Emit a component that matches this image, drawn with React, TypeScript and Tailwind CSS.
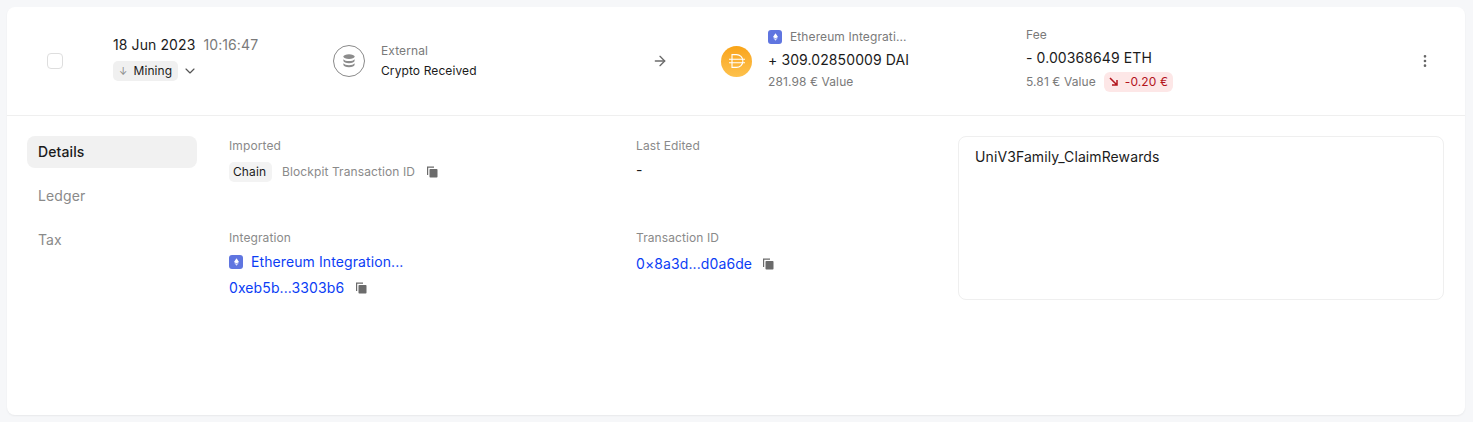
import { ArrowRight, ChevronDown, MoreVertical } from 'lucide-react'

function CopyIcon() {
  return (
    <svg width="14" height="14" viewBox="0 0 14 14" className="shrink-0">
      <path d="M2 1.5h7v1.2H3.2V10H2z" fill="#6b6b6b" />
      <rect x="4.5" y="4" width="8" height="8.5" rx="0.8" fill="#6b6b6b" />
    </svg>
  )
}

function EthBadge() {
  return (
    <span className="w-[14px] h-[14px] rounded-[3px] bg-[#5f75e0] flex items-center justify-center shrink-0">
      <svg width="5" height="8" viewBox="0 0 6 9">
        <path d="M3 0 6 4.500 3 6.200 0 4.500z" fill="#ffffff" />
        <path d="M0 5.200 3 7 6 5.200 3 9z" fill="#dfe4fb" />
      </svg>
    </span>
  )
}

function DaiIcon() {
  return (
    <span className="w-[31px] h-[31px] rounded-full bg-gradient-to-b from-[#f9a416] to-[#fdc14b] flex items-center justify-center shrink-0">
      <svg width="18" height="14" viewBox="0 0 18 14" fill="none" stroke="#ffffff" strokeWidth="1.1">
        <path d="M4 .6v12.800h4.500a6.400 6.400 0 0 0 0-12.800z" />
        <path d="M1 5.200h16M1 8.800h16" />
      </svg>
    </span>
  )
}

function StackIcon() {
  return (
    <span className="w-8 h-8 rounded-full border border-[#8a8a8a] flex items-center justify-center shrink-0">
      <svg width="12" height="14" viewBox="0 0 12 14" fill="#8c8c8c">
        <ellipse cx="6" cy="2.600" rx="5.600" ry="2.400" />
        <path d="M.4 5.200c1 1.300 3 1.900 5.600 1.900s4.600-.6 5.600-1.900v1.600c0 1.400-2.500 2.500-5.600 2.500S.4 8.200.4 6.800z" />
        <path d="M.4 9.300c1 1.300 3 1.900 5.600 1.900s4.600-.6 5.600-1.900v1.400c0 1.400-2.500 2.500-5.600 2.500S.4 12.100.4 10.700z" />
      </svg>
    </span>
  )
}

function Header() {
  return (
    <div className="h-[109px] border-b border-[#efefef] flex items-center pl-10 text-[#1b1b1b]">
      <div className="w-[66px] shrink-0">
        <div className="w-4 h-4 rounded-[4px] border border-[#dedede] bg-white" />
      </div>
      <div className="w-[220px] shrink-0 flex flex-col gap-[6px] mb-[6px]">
        <div className="flex items-center gap-[8px] text-[14px] leading-[20px]">
          <span>18 Jun 2023</span>
          <span className="text-[#7a7a7a]">10:16:47</span>
        </div>
        <div className="flex items-center gap-1">
          <span className="h-5 pl-[6px] pr-[6px] rounded-[5px] bg-[#f0f0f0] flex items-center gap-[6px] text-[12px]">
            <span className="text-[#8a8a8a] text-[10px]">↓</span>
            Mining
          </span>
          <ChevronDown size={16} color="#555555" strokeWidth={1.75} />
        </div>
      </div>
      <div className="w-[320px] shrink-0 flex items-center gap-4">
        <StackIcon />
        <div className="flex flex-col gap-[4px] text-[12px] leading-4">
          <span className="text-[#7a7a7a]">External</span>
          <span>Crypto Received</span>
        </div>
      </div>
      <div className="w-[68px] shrink-0">
        <ArrowRight size={16} color="#6b6b6b" className="-ml-px" />
      </div>
      <div className="w-[305px] shrink-0 flex items-center gap-4">
        <DaiIcon />
        <div className="flex flex-col mb-[4px]">
          <div className="flex items-center gap-2 text-[12px] leading-4 text-[#7a7a7a]">
            <EthBadge />
            <span>Ethereum Integrati...</span>
          </div>
          <span className="text-[14px] leading-5 mt-[5px]">+ 309.02850009 DAI</span>
          <span className="text-[12px] leading-4 text-[#7a7a7a] mt-[4px]">281.98 € Value</span>
        </div>
      </div>
      <div className="w-[392px] shrink-0 flex flex-col mb-[4px]">
        <span className="text-[12px] leading-4 text-[#7a7a7a]">Fee</span>
        <span className="text-[14px] leading-5 mt-[5px]">- 0.00368649 ETH</span>
        <div className="flex items-center gap-2 mt-[4px]">
          <span className="text-[12px] leading-4 text-[#7a7a7a]">5.81 € Value</span>
          <span className="h-5 px-[5px] rounded-[6px] bg-[#fde7e7] text-[#b3141c] text-[12px] flex items-center gap-[7px]">
            <svg width="9" height="9" viewBox="0 0 9 9" fill="none" stroke="#b3141c" strokeWidth="1.5">
              <path d="M1 1l6.500 6.500M8 3v5H3" />
            </svg>
            -0.20 €
          </span>
        </div>
      </div>
      <MoreVertical size={16} color="#666666" className="-ml-px" />
    </div>
  )
}

function Label({ children }: { children: string }) {
  return <div className="text-[12px] leading-4 text-[#8a8a8a]">{children}</div>
}

function Details() {
  return (
    <div className="flex pl-5 pt-5 pr-[21px]">
      <div className="w-[170px] shrink-0 flex flex-col gap-3 text-[14px]">
        <div className="h-8 pl-[11px] pb-[2px] rounded-lg bg-[#f1f1f1] flex items-center font-medium text-[#1b1b1b]">Details</div>
        <div className="h-8 pl-[11px] pb-[2px] flex items-center text-[#8a8a8a]">Ledger</div>
        <div className="h-8 pl-[11px] pb-[2px] flex items-center text-[#8a8a8a]">Tax</div>
      </div>
      <div className="ml-[32px] mt-[2px] w-[729px] shrink-0 grid grid-cols-[407px_322px] grid-rows-[92px_auto]">
        <div>
          <Label>Imported</Label>
          <div className="flex items-center mt-[8px] text-[12px]">
            <span className="h-5 pl-1 pr-[6px] rounded-[5px] bg-[#f3f3f3] flex items-center text-[#1b1b1b]">Chain</span>
            <span className="ml-[10px] text-[#8a8a8a]">Blockpit Transaction ID</span>
            <span className="ml-[10px]"><CopyIcon /></span>
          </div>
        </div>
        <div>
          <Label>Last Edited</Label>
          <div className="mt-[6px] text-[14px] leading-5 text-[#1b1b1b]">-</div>
        </div>
        <div>
          <Label>Integration</Label>
          <div className="flex items-center gap-2 mt-[6px] text-[14px] leading-5 text-[#0b3df5]">
            <EthBadge />
            <span>Ethereum Integration...</span>
          </div>
          <div className="flex items-center gap-[10px] mt-[6px] text-[14px] leading-5 text-[#0b3df5]">
            <span>0xeb5b...3303b6</span>
            <CopyIcon />
          </div>
        </div>
        <div>
          <Label>Transaction ID</Label>
          <div className="flex items-center gap-[9px] mt-[8px] text-[14px] leading-5 text-[#0b3df5]">
            <span>0×8a3d...d0a6de</span>
            <CopyIcon />
          </div>
        </div>
      </div>
      <div className="w-[486px] h-[164px] shrink-0 rounded-lg border border-[#efefef] px-4 py-[10px] text-[14px] leading-5 text-[#1b1b1b]">
        UniV3Family_ClaimRewards
      </div>
    </div>
  )
}

export default function App() {
  return (
    <div className="h-[422px] bg-[#f6f7f9] p-[7px] font-['Inter',sans-serif] tracking-[0.1px] overflow-hidden">
      <div className="w-[1458px] h-[408px] bg-white rounded-lg shadow-[0_1px_2px_rgba(0,0,0,0.06)]">
        <Header />
        <Details />
      </div>
    </div>
  )
}
